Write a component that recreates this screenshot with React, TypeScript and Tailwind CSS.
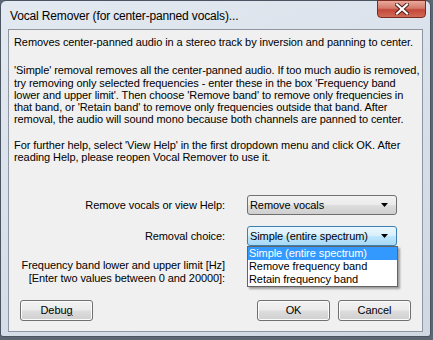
import React from "react";

const font = { fontFamily: '"Liberation Sans", Arial, sans-serif' };

function Btn({ label, underline }: { label: string; underline?: boolean }) {
  return (
    <button className="w-[73px] h-[21px] rounded-[3px] border border-[#707070] bg-[linear-gradient(#f2f2f2_0%,#ebebeb_48%,#dddddd_52%,#cfcfcf_100%)] text-[11px] text-black shadow-[inset_0_0_0_1px_#fcfcfc] leading-none">
      {underline ? (
        <span>
          {label.slice(0, -1)}
          <span className="underline">{label.slice(-1)}</span>
        </span>
      ) : (
        label
      )}
    </button>
  );
}

function Combo({ value, focused }: { value: string; focused?: boolean }) {
  return (
    <div
      className={
        focused
          ? "w-[150px] h-[20px] rounded-[3px] border border-[#3c7fb1] bg-[linear-gradient(#eaf6fd_0%,#d9f0fc_48%,#bee6fd_52%,#a7d9f5_100%)] flex items-center justify-between pl-[2px] pr-[8px]"
          : "w-[150px] h-[20px] rounded-[3px] border border-[#707070] bg-[linear-gradient(#f2f2f2_0%,#ebebeb_48%,#dddddd_52%,#cfcfcf_100%)] flex items-center justify-between pl-[2px] pr-[8px]"
      }
    >
      <span className="text-[11px] leading-none whitespace-nowrap">{value}</span>
      <svg width="7" height="4" viewBox="0 0 7 4">
        <path d="M0 0h7L3.5 4z" fill="#000" />
      </svg>
    </div>
  );
}

export default function App() {
  return (
    <div className="w-[433px] h-[340px] bg-[#5d6673] overflow-hidden" style={font}>
      <div className="w-[431px] h-[337px] rounded-t-[6px] rounded-b-[3px] border border-[#4b5561] bg-[linear-gradient(160deg,#e3e9f0_0%,#d8e0ea_50%,#cfd8e3_100%)] flex flex-col px-[7px] text-black">
        <div className="h-[28px] flex items-start">
          <span className="pl-[2px] pt-[8px] text-[12px] leading-[14px] tracking-[-0.15px] whitespace-nowrap">
            Vocal Remover (for center-panned vocals)...
          </span>
          <div className="ml-auto -mt-px -mr-[3px] w-[49px] h-[18px] rounded-b-[4px] border border-[#7a2b22] bg-[linear-gradient(#e9a99b_0%,#d47a6b_45%,#c4473a_55%,#cf6a55_100%)] flex items-center justify-center">
            <svg width="14" height="12" viewBox="0 0 14 12">
              <path d="M2 1.5L12 10.5M12 1.5L2 10.5" stroke="#4a1a14" strokeWidth="4" strokeLinecap="square" />
              <path d="M2 1.5L12 10.5M12 1.5L2 10.5" stroke="#ffffff" strokeWidth="2.2" strokeLinecap="square" />
            </svg>
          </div>
        </div>

        <div className="h-[303px] bg-[#f0f0f0] border border-[#8d96a1] flex flex-col text-[11px] leading-[12.3px] tracking-[-0.08px] text-black whitespace-nowrap">
          <p className="pl-[5px] pt-[6px]">
            Removes center-panned audio in a stereo track by inversion and panning to center.
          </p>
          <p className="pl-[5px] mt-[16px]">
            'Simple' removal removes all the center-panned audio. If too much audio is removed,
            <br />
            try removing only selected frequencies - enter these in the box 'Frequency band
            <br />
            lower and upper limit'. Then choose 'Remove band' to remove only frequencies in
            <br />
            that band, or 'Retain band' to remove only frequencies outside that band. After
            <br />
            removal, the audio will sound mono because both channels are panned to center.
          </p>
          <p className="pl-[5px] mt-[13px]">
            For further help, select 'View Help' in the first dropdown menu and click OK. After
            <br />
            reading Help, please reopen Vocal Remover to use it.
          </p>

          <div className="mt-[32px] flex items-center gap-[22px]">
            <span className="w-[216px] text-right">Remove vocals or view Help:</span>
            <Combo value="Remove vocals" />
          </div>
          <div className="mt-[11px] flex items-center gap-[22px]">
            <span className="w-[216px] text-right">Removal choice:</span>
            <div className="relative">
              <Combo value="Simple (entire spectrum)" focused />
              <div className="absolute left-0 top-[20px] z-10 w-[151px] border border-[#646464] bg-white shadow-[2px_2px_2px_rgba(0,0,0,0.35)] leading-[13px] text-black">
                <div className="bg-[#3399ff] text-white pl-[1px]">Simple (entire spectrum)</div>
                <div className="pl-[1px]">Remove frequency band</div>
                <div className="pl-[1px]">Retain frequency band</div>
              </div>
            </div>
          </div>
          <div className="mt-[13px] flex gap-[22px]">
            <div className="w-[216px] text-right">
              <div>Frequency band lower and upper limit [Hz]</div>
              <div>[Enter two values between 0 and 20000]:</div>
            </div>
          </div>

          <div className="mt-auto mb-[10px] flex items-center px-[11px]">
            <Btn label="Debug" underline />
            <div className="ml-auto flex gap-[8px]">
              <Btn label="OK" />
              <Btn label="Cancel" />
            </div>
          </div>
        </div>
      </div>
    </div>
  );
}
